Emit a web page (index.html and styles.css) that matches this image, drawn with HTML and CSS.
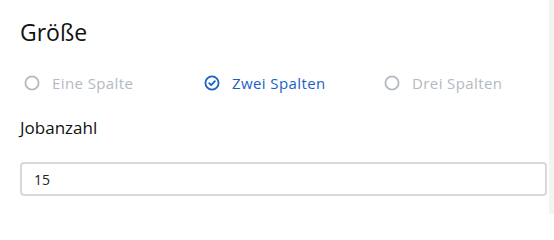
FILE: index.html
```html
<!DOCTYPE html>
<html lang="de">
<head>
<meta charset="utf-8">
<link rel="stylesheet" href="styles.css">
</head>
<body>
<main class="panel">
  <h2 class="title">Größe</h2>
  <div class="options">
    <label class="option disabled">
      <svg class="icon" viewBox="0 0 16 16"><circle cx="8" cy="8" r="6.6" fill="none" stroke="currentColor" stroke-width="1.8"/></svg>
      <span>Eine Spalte</span>
    </label>
    <label class="option active">
      <svg class="icon" viewBox="0 0 16 16"><circle cx="8" cy="8" r="6.6" fill="none" stroke="currentColor" stroke-width="1.8"/><path d="M5.2 8.2 L7.2 10.1 L10.9 6.2" fill="none" stroke="currentColor" stroke-width="1.8" stroke-linecap="round" stroke-linejoin="round"/></svg>
      <span>Zwei Spalten</span>
    </label>
    <label class="option disabled">
      <svg class="icon" viewBox="0 0 16 16"><circle cx="8" cy="8" r="6.6" fill="none" stroke="currentColor" stroke-width="1.8"/></svg>
      <span>Drei Spalten</span>
    </label>
  </div>
  <label class="field-label">Jobanzahl</label>
  <div class="input">15</div>
</main>
<div class="strip"></div>
</body>
</html>
```
FILE: styles.css
```css
html, body {
  margin: 0;
  padding: 0;
  background: #ffffff;
}
body {
  display: flex;
  height: 214px;
  overflow: hidden;
  font-family: "Open Sans", "Noto Sans", sans-serif;
}
.panel {
  width: 549px;
  flex: none;
  box-sizing: border-box;
  background: #ffffff;
  padding: 18px 2px 0 20px;
}
.strip {
  flex: 1;
  background: #f3f3f3;
}
.title {
  margin: 0;
  font-size: 23px;
  line-height: 28px;
  font-weight: 400;
  color: #111111;
}
.options {
  display: grid;
  grid-template-columns: 180px 180px 180px;
  margin-top: 25px;
  height: 24px;
  align-items: center;
}
.option {
  display: flex;
  align-items: center;
  gap: 12px;
  padding-left: 4px;
  font-size: 15px;
  letter-spacing: 0.4px;
}
.icon {
  width: 16px;
  height: 16px;
  flex: none;
}
.disabled {
  color: #b3b9c2;
}
.active {
  color: #1a5fc8;
}
.field-label {
  display: block;
  margin-top: 21px;
  font-size: 17px;
  line-height: 24px;
  color: #111111;
}
.input {
  margin-top: 22px;
  height: 34px;
  box-sizing: border-box;
  border: 2px solid #d9d9d9;
  border-radius: 4px;
  padding: 0 12px;
  display: flex;
  align-items: center;
  font-size: 14px;
  color: #222222;
}
```
